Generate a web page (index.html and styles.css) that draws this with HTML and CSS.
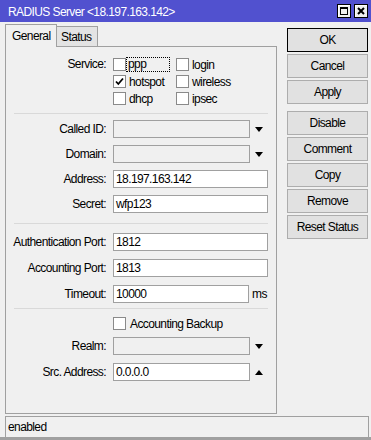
FILE: index.html
```html
<!DOCTYPE html>
<html>
<head>
<meta charset="utf-8">
<link rel="stylesheet" href="styles.css">
</head>
<body>
<div class="window">
  <div class="titlebar">
    <span class="title">RADIUS Server &lt;18.197.163.142&gt;</span>
    <div class="tb-buttons">
      <span class="tb-btn"><svg width="10" height="10" viewBox="0 0 10 10"><rect x="1.5" y="1.5" width="7" height="7" fill="none" stroke="#000"/><rect x="1" y="1" width="8" height="2" fill="#000"/></svg></span>
      <span class="tb-btn"><svg width="10" height="10" viewBox="0 0 10 10"><path d="M2 2L8 8M8 2L2 8" stroke="#000" stroke-width="2"/></svg></span>
    </div>
  </div>
  <div class="main">
    <div class="tabview">
      <div class="tabs">
        <div class="tab active">General</div>
        <div class="tab inactive">Status</div>
        <div class="tab-fill"></div>
      </div>
      <div class="panel">
        <div class="group g-service">
          <div class="service">
            <div class="lbl lbl-check">Service:</div>
            <div class="checkgrid">
              <label class="check"><span class="box"></span><span class="ctext focus">ppp</span></label>
              <label class="check"><span class="box"></span><span class="ctext">login</span></label>
              <label class="check"><span class="box"><svg width="11" height="11" viewBox="0 0 11 11"><path d="M2 5.5L4.3 8L9 2.5" fill="none" stroke="#000" stroke-width="1.8"/></svg></span><span class="ctext">hotspot</span></label>
              <label class="check"><span class="box"></span><span class="ctext">wireless</span></label>
              <label class="check"><span class="box"></span><span class="ctext">dhcp</span></label>
              <label class="check"><span class="box"></span><span class="ctext">ipsec</span></label>
            </div>
          </div>
        </div>
        <div class="sep"></div>
        <div class="group g-ids">
          <div class="row"><div class="lbl">Called ID:</div><div class="inp short dis"></div><svg class="arrow" width="8" height="5" viewBox="0 0 8 5"><path d="M0 0H8L4 5Z" fill="#000"/></svg></div>
          <div class="row"><div class="lbl">Domain:</div><div class="inp short dis"></div><svg class="arrow" width="8" height="5" viewBox="0 0 8 5"><path d="M0 0H8L4 5Z" fill="#000"/></svg></div>
          <div class="row"><div class="lbl">Address:</div><div class="inp">18.197.163.142</div></div>
          <div class="row"><div class="lbl">Secret:</div><div class="inp">wfp123</div></div>
        </div>
        <div class="sep"></div>
        <div class="group g-ports">
          <div class="row"><div class="lbl">Authentication Port:</div><div class="inp">1812</div></div>
          <div class="row"><div class="lbl">Accounting Port:</div><div class="inp">1813</div></div>
          <div class="row"><div class="lbl">Timeout:</div><div class="inp mid">10000</div><span class="unit">ms</span></div>
        </div>
        <div class="sep"></div>
        <div class="group g-backup">
          <div class="row row-check"><div class="lbl"></div><label class="check"><span class="box"></span><span class="ctext wide">Accounting Backup</span></label></div>
          <div class="row"><div class="lbl">Realm:</div><div class="inp short dis"></div><svg class="arrow" width="8" height="5" viewBox="0 0 8 5"><path d="M0 0H8L4 5Z" fill="#000"/></svg></div>
          <div class="row"><div class="lbl">Src. Address:</div><div class="inp short">0.0.0.0</div><svg class="arrow" width="8" height="5" viewBox="0 0 8 5"><path d="M0 5H8L4 0Z" fill="#000"/></svg></div>
        </div>
      </div>
    </div>
    <div class="buttons">
      <div class="btn default">OK</div>
      <div class="btn">Cancel</div>
      <div class="btn">Apply</div>
      <div class="btn spaced">Disable</div>
      <div class="btn">Comment</div>
      <div class="btn">Copy</div>
      <div class="btn">Remove</div>
      <div class="btn">Reset Status</div>
    </div>
  </div>
  <div class="statusbar">enabled</div>
  <div class="bottomband"></div>
</div>
</body>
</html>
```
FILE: styles.css
```css
html, body {
  margin: 0;
  padding: 0;
}
body {
  background: #f0f0f0;
  font-family: "Liberation Sans", Arial, sans-serif;
  font-size: 12px;
  letter-spacing: -0.6px;
  color: #000;
}
.window {
  width: 371px;
  height: 440px;
  display: flex;
  flex-direction: column;
  overflow: hidden;
}
.titlebar {
  height: 22px;
  flex: none;
  box-sizing: border-box;
  background: #5151cf;
  color: #fff;
  display: flex;
  align-items: center;
  justify-content: space-between;
  padding: 0 3px 0 8px;
}
.title {
  padding-top: 2px;
}
.tb-buttons {
  display: flex;
  gap: 3px;
}
.tb-btn {
  width: 14px;
  height: 14px;
  box-sizing: border-box;
  border: 1px solid #000;
  background: #f0f0f0;
  box-shadow: inset 1px 1px 0 #fff;
  display: flex;
  align-items: center;
  justify-content: center;
}
.main {
  display: flex;
  height: 392px;
  flex: none;
  padding-left: 5px;
}
.tabview {
  width: 272px;
  padding-top: 2px;
  display: flex;
  flex-direction: column;
}
.tabs {
  display: flex;
  align-items: flex-end;
  height: 23px;
}
.tab {
  box-sizing: border-box;
  display: flex;
  align-items: center;
}
.tab.active {
  width: 52px;
  height: 23px;
  border: 1px solid #a0a0a0;
  border-bottom: none;
  padding-left: 6px;
  background: #f0f0f0;
}
.tab.inactive {
  width: 41px;
  height: 21px;
  border-top: 1px solid #a0a0a0;
  border-right: 1px solid #a0a0a0;
  border-bottom: 1px solid #a0a0a0;
  padding-left: 4px;
  background: #e3e3e3;
}
.tab-fill {
  flex: 1;
  border-bottom: 1px solid #a0a0a0;
}
.panel {
  height: 367px;
  box-sizing: border-box;
  border: 1px solid #a0a0a0;
  border-top: none;
}
.sep {
  height: 1px;
  margin: 0 8px;
  background: #d9d9d9;
}
.group {
  display: flex;
  flex-direction: column;
}
.g-service {
  padding: 9px 0 6px;
}
.g-ids {
  padding: 6px 0 10px;
  gap: 7px;
}
.g-ports {
  padding: 9px 0 5px;
  gap: 8px;
}
.g-backup {
  padding: 8px 0 0;
  gap: 7px;
}
.g-backup .row + .row + .row {
  margin-top: 1px;
}
.service {
  display: flex;
}
.lbl {
  width: 107px;
  flex: none;
  box-sizing: border-box;
  padding-right: 7px;
  text-align: right;
  white-space: nowrap;
}
.lbl-check {
  height: 17px;
  line-height: 17px;
}
.checkgrid {
  display: grid;
  grid-template-columns: 63px auto;
  grid-auto-rows: 17px;
}
.check {
  display: flex;
  align-items: center;
}
.box {
  width: 13px;
  height: 13px;
  flex: none;
  box-sizing: border-box;
  border: 1px solid #8a8a8a;
  background: #fff;
  display: flex;
  align-items: center;
  justify-content: center;
}
.ctext {
  padding-left: 3px;
}
.ctext.focus {
  box-sizing: border-box;
  width: 44px;
  height: 15px;
  line-height: 13px;
  padding-left: 1px;
  border: 1px dotted #000;
}
.ctext.wide {
  padding-left: 4px;
}
.row {
  display: flex;
  align-items: center;
  height: 18px;
}
.row-check {
  height: 13px;
}
.inp {
  width: 155px;
  height: 18px;
  box-sizing: border-box;
  border: 1px solid #a0a0a0;
  background: #fff;
  padding: 0 2px;
  display: flex;
  align-items: center;
  flex: none;
}
.inp.short {
  width: 137px;
}
.inp.mid {
  width: 136px;
}
.inp.dis {
  background: #f0f0f0;
}
.arrow {
  margin-left: 5px;
  flex: none;
}
.unit {
  margin-left: 3px;
}
.buttons {
  width: 81px;
  margin-left: 10px;
  padding-top: 6px;
  display: flex;
  flex-direction: column;
  gap: 2px;
}
.btn {
  height: 24px;
  box-sizing: border-box;
  border: 1px solid #adadad;
  background: #e1e1e1;
  display: flex;
  align-items: center;
  justify-content: center;
}
.btn.default {
  border-color: #000;
}
.btn.spaced {
  margin-top: 5px;
}
.statusbar {
  height: 21px;
  flex: none;
  box-sizing: border-box;
  margin: 2px 2px 0 5px;
  border: 1px solid #a0a0a0;
  border-bottom: none;
  padding-left: 2px;
  display: flex;
  align-items: center;
}
.bottomband {
  height: 3px;
  flex: none;
  background: #a0a0a0;
}
```
